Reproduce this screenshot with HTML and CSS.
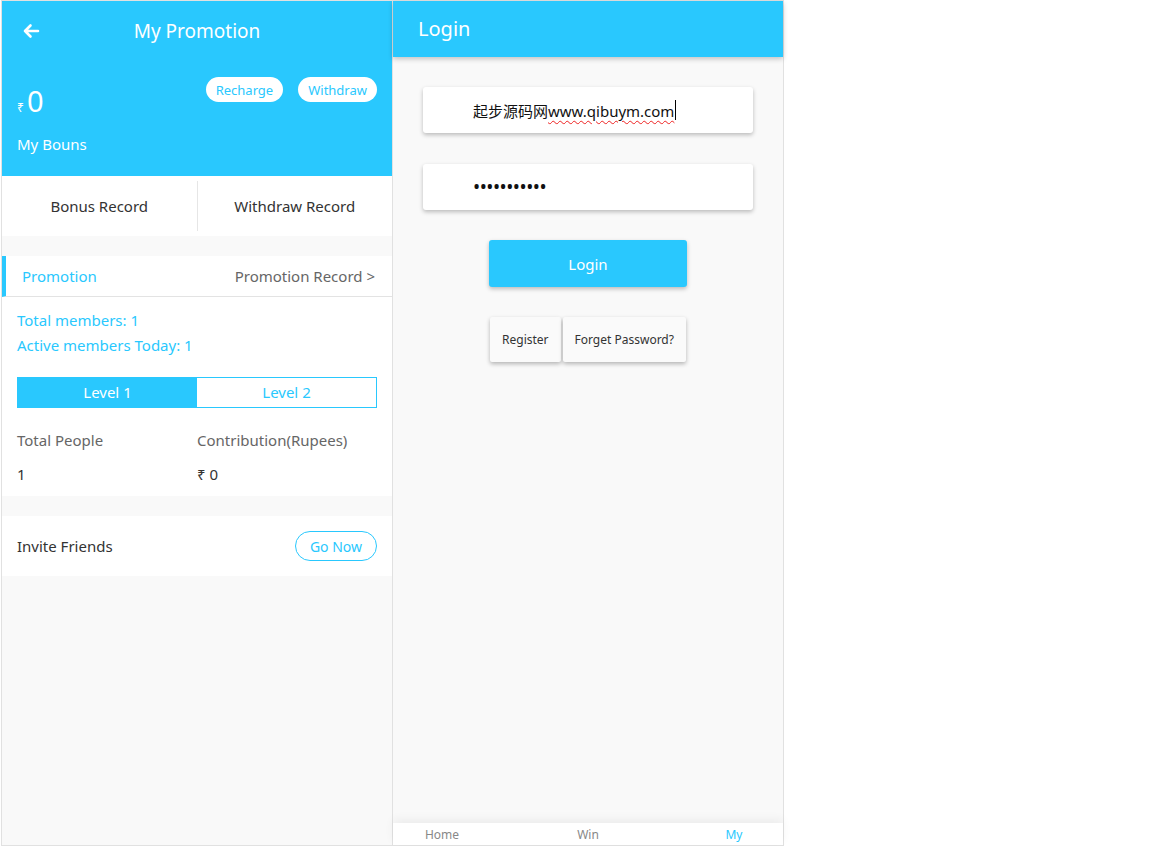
FILE: index.html
```html
<!DOCTYPE html>
<html lang="en">
<head>
  <meta charset="UTF-8">
  <meta name="viewport" content="width=device-width, initial-scale=1.0">
  <title>My Promotion / Login</title>
  <link rel="stylesheet" href="styles.css">
</head>
<body>
  <div class="screens">

    <!-- promotion screen -->
    <div class="phone">
      <div class="promo-head">
        <div class="topbar">
          <svg class="back" width="18" height="16" viewBox="0 0 18 16">
            <path d="M16 8H3M8.5 2.5L3 8l5.5 5.5" fill="none" stroke="#fff" stroke-width="2.6" stroke-linecap="round" stroke-linejoin="round"/>
          </svg>
          <h1>My Promotion</h1>
        </div>
        <div class="bonus-row">
          <div class="amount"><span class="rupee">₹</span>0</div>
          <div class="head-btns">
            <button class="pill">Recharge</button>
            <button class="pill">Withdraw</button>
          </div>
        </div>
        <p class="bonus-label">My Bouns</p>
      </div>

      <div class="records">
        <div class="record">Bonus Record</div>
        <div class="record">Withdraw Record</div>
      </div>

      <div class="card">
        <div class="card-title">
          <span class="title-blue">Promotion</span>
          <span class="title-link">Promotion Record &gt;</span>
        </div>
        <div class="members">
          <p>Total members: 1</p>
          <p>Active members Today: 1</p>
        </div>
        <div class="levels">
          <div class="level active">Level 1</div>
          <div class="level">Level 2</div>
        </div>
        <div class="stats">
          <span class="stat-label">Total People</span>
          <span class="stat-label">Contribution(Rupees)</span>
          <span class="stat-value">1</span>
          <span class="stat-value">₹ 0</span>
        </div>
      </div>

      <div class="invite">
        <span>Invite Friends</span>
        <button class="go-now">Go Now</button>
      </div>
    </div>

    <!-- login screen -->
    <div class="phone login">
      <div class="login-head">Login</div>
      <div class="login-body">
        <div class="field">
          <span class="field-text">起步源码网<span class="typo">www.qibuym.com</span></span><span class="caret"></span>
        </div>
        <div class="field">
          <span class="field-text dots">•••••••••••</span>
        </div>
        <button class="login-btn">Login</button>
        <div class="sub-btns">
          <button class="sub-btn">Register</button>
          <button class="sub-btn">Forget Password?</button>
        </div>
      </div>
      <div class="tabbar">
        <span>Home</span>
        <span>Win</span>
        <span class="current">My</span>
      </div>
    </div>

  </div>
</body>
</html>
```

FILE: styles.css
```css
* {
  box-sizing: border-box;
}

body {
  margin: 0;
  background: #fff;
  font-family: "Noto Sans", "Noto Sans CJK SC", sans-serif;
  color: #333;
}

p {
  margin: 0;
}

button {
  font-family: inherit;
  border: none;
  cursor: pointer;
}

.screens {
  display: flex;
  padding-left: 1px;
}

.phone {
  width: 392px;
  height: 846px;
  border: 1px solid #e1e1e1;
  background: #f9f9f9;
  display: flex;
  flex-direction: column;
}

.phone + .phone {
  margin-left: -1px;
}

/* promotion */
.promo-head {
  background: #29c8fe;
  color: #fff;
  height: 175px;
  padding: 0 15px;
}

.topbar {
  height: 59px;
  display: flex;
  align-items: center;
  justify-content: center;
  position: relative;
}

.back {
  position: absolute;
  left: 5px;
  top: 22px;
}

.topbar h1 {
  margin: 0;
  font-size: 19px;
  font-weight: 400;
}

.bonus-row {
  display: flex;
  justify-content: space-between;
  align-items: flex-start;
  padding-top: 17px;
}

.amount {
  margin-top: 8px;
  font-size: 29px;
  line-height: 32px;
}

.rupee {
  font-size: 12px;
  margin-right: 3px;
}

.head-btns {
  display: flex;
  gap: 15px;
}

.pill {
  height: 25px;
  padding: 0 10px;
  border-radius: 13px;
  background: #fff;
  color: #29c8fe;
  font-size: 13px;
}

.bonus-label {
  margin-top: 10px;
  font-size: 15px;
  line-height: 20px;
}

.records {
  display: flex;
  align-items: center;
  height: 60px;
  background: #fff;
}

.record {
  flex: 1;
  text-align: center;
  font-size: 15px;
  line-height: 50px;
}

.record + .record {
  border-left: 1px solid #e6e6e6;
}

.card {
  margin-top: 20px;
  background: #fff;
  padding-bottom: 12px;
}

.card-title {
  display: flex;
  justify-content: space-between;
  align-items: center;
  height: 41px;
  padding: 0 17px 0 16px;
  border-left: 4px solid #29c8fe;
  border-bottom: 1px solid #e3e3e3;
  font-size: 15px;
}

.title-blue {
  color: #29c8fe;
}

.title-link {
  color: #666;
}

.members {
  padding: 11px 15px 0;
  color: #29c8fe;
  font-size: 15px;
  line-height: 25px;
}

.levels {
  display: flex;
  margin: 19px 15px 0;
  border: 1px solid #29c8fe;
  height: 31px;
}

.level {
  flex: 1;
  text-align: center;
  line-height: 29px;
  font-size: 15px;
  color: #29c8fe;
}

.level.active {
  background: #29c8fe;
  color: #fff;
}

.stats {
  display: grid;
  grid-template-columns: 180px 1fr;
  row-gap: 14px;
  padding: 22px 15px 0;
  font-size: 15px;
  line-height: 20px;
}

.stat-label {
  color: #666;
}

.stat-value {
  color: #333;
}

.invite {
  margin-top: 20px;
  height: 60px;
  background: #fff;
  display: flex;
  justify-content: space-between;
  align-items: center;
  padding: 0 15px;
  font-size: 15px;
}

.go-now {
  height: 30px;
  width: 82px;
  border: 1px solid #29c8fe;
  border-radius: 15px;
  background: #fff;
  color: #29c8fe;
  font-size: 14px;
}

/* login */
.login-head {
  height: 56px;
  background: #29c8fe;
  color: #fff;
  font-size: 20px;
  line-height: 56px;
  padding-left: 25px;
  box-shadow: 0 2px 5px rgba(0, 0, 0, 0.22);
  position: relative;
}

.login-body {
  flex: 1;
  display: flex;
  flex-direction: column;
  align-items: center;
  padding-top: 30px;
}

.field {
  width: 330px;
  height: 46px;
  background: #fff;
  border-radius: 3px;
  box-shadow: 0 2px 4px rgba(0, 0, 0, 0.25);
  display: flex;
  align-items: center;
  padding-left: 50px;
  margin-bottom: 31px;
  font-size: 15px;
  color: #111;
}

.typo {
  text-decoration: underline wavy #e22;
  text-decoration-thickness: 1px;
  text-underline-offset: 3px;
}

.caret {
  width: 1px;
  height: 20px;
  background: #000;
  margin-left: 1px;
}

.dots {
  font-size: 19px;
  letter-spacing: -0.5px;
}

.login-btn {
  width: 198px;
  height: 47px;
  margin-top: -1px;
  border-radius: 3px;
  background: #29c8fe;
  color: #fff;
  font-size: 15px;
  box-shadow: 0 2px 4px rgba(0, 0, 0, 0.25);
}

.sub-btns {
  display: flex;
  gap: 2px;
  margin-top: 30px;
}

.sub-btn {
  height: 45px;
  padding: 0 12px;
  border-radius: 2px;
  background: #fafafa;
  color: #333;
  font-size: 12px;
  box-shadow: 0 2px 4px rgba(0, 0, 0, 0.28);
}

.tabbar {
  height: 22px;
  background: #fff;
  display: grid;
  grid-template-columns: 98px 1fr 98px;
  align-items: center;
  text-align: center;
  box-shadow: 0 -4px 10px rgba(0, 0, 0, 0.05);
  font-size: 12px;
  color: #888;
}

.tabbar .current {
  color: #29c8fe;
}
```
